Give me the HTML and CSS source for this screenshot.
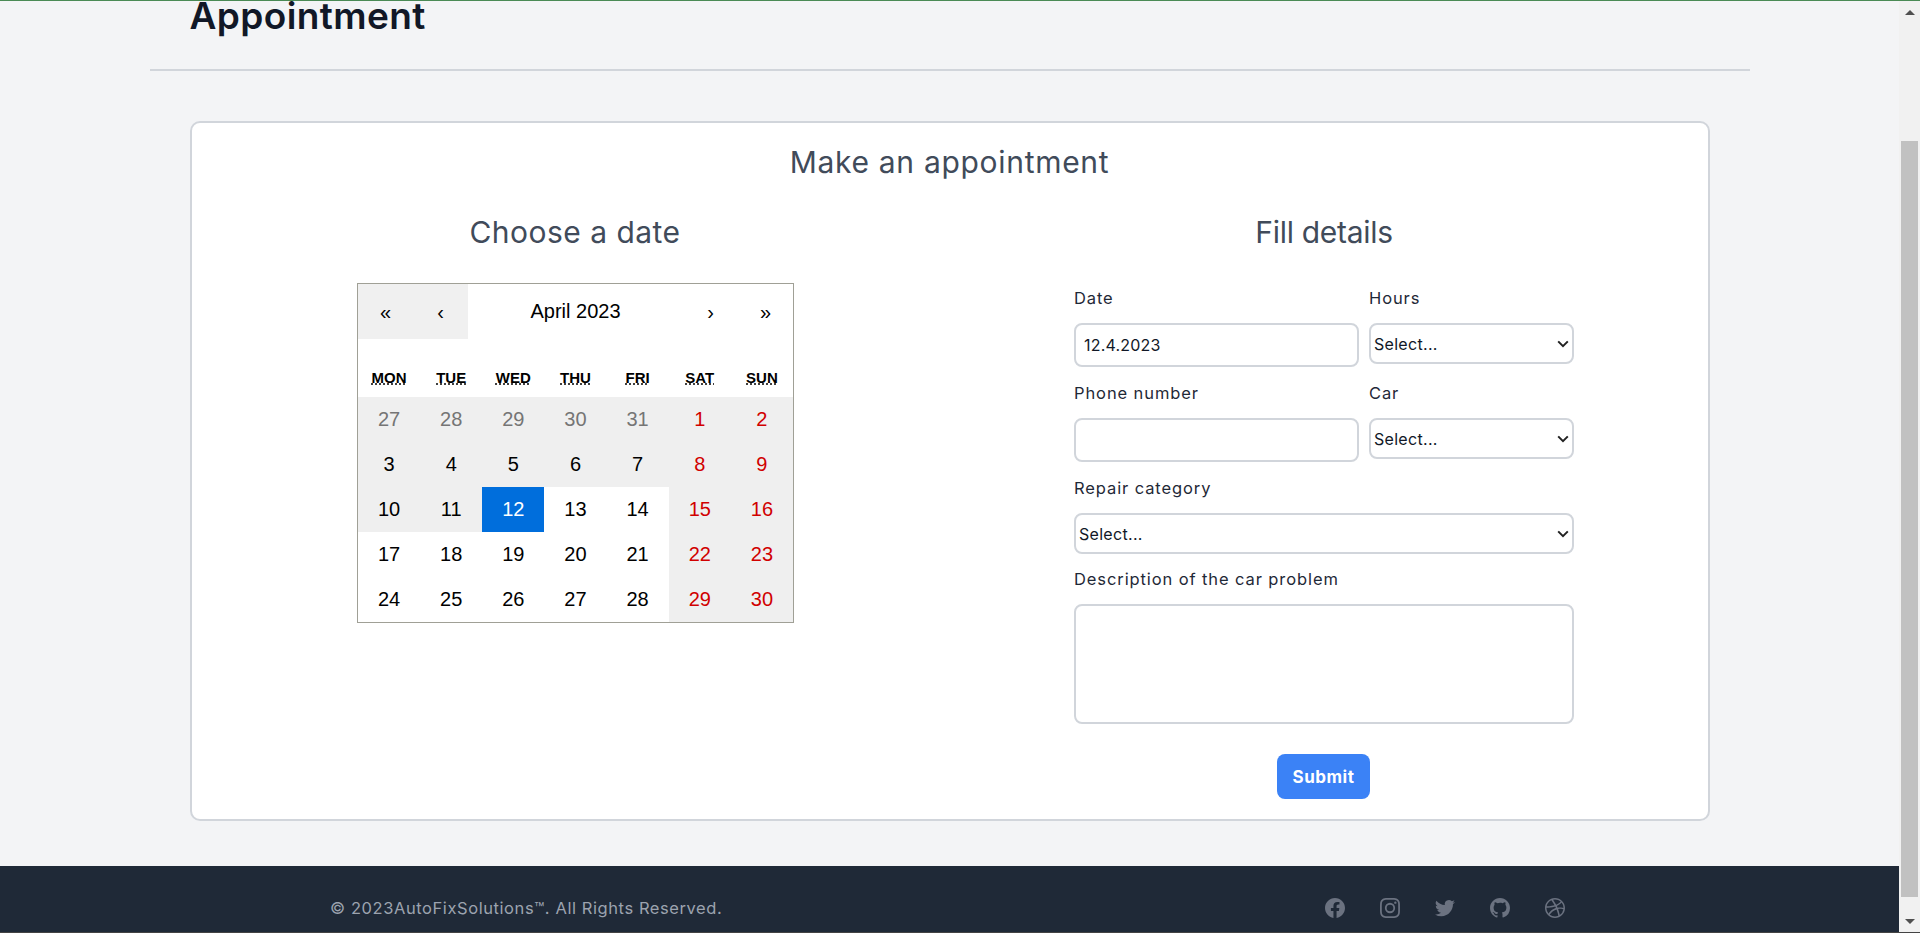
FILE: index.html
```html
<!DOCTYPE html>
<html>
  <head>
    <meta charset="UTF-8">
    <title>Appointment</title>
    <link rel="stylesheet" href="styles.css">
  </head>
  <body>
    <div class="topline"></div>
    <div class="viewport">
      <div class="page">
        <main class="container">
          <header class="page-header">
            <h1>Appointment</h1>
          </header>
          <section class="card">
            <h2 class="card-title">Make an appointment</h2>
            <div class="columns">
              <div class="col">
                <h3 class="col-title">Choose a date</h3>
                <div class="calendar">
                  <div class="cal-nav">
                    <button class="nav-btn focused">«</button>
                    <button class="nav-btn focused">‹</button>
                    <span class="nav-label">April 2023</span>
                    <button class="nav-btn">›</button>
                    <button class="nav-btn">»</button>
                  </div>
                  <div class="weekdays">
                    <div><abbr>MON</abbr></div>
                    <div><abbr>TUE</abbr></div>
                    <div><abbr>WED</abbr></div>
                    <div><abbr>THU</abbr></div>
                    <div><abbr>FRI</abbr></div>
                    <div><abbr>SAT</abbr></div>
                    <div><abbr>SUN</abbr></div>
                  </div>
                  <div class="days">
                    <div class="day off other">27</div>
                    <div class="day off other">28</div>
                    <div class="day off other">29</div>
                    <div class="day off other">30</div>
                    <div class="day off other">31</div>
                    <div class="day off red">1</div>
                    <div class="day off red">2</div>
                    <div class="day off">3</div>
                    <div class="day off">4</div>
                    <div class="day off">5</div>
                    <div class="day off">6</div>
                    <div class="day off">7</div>
                    <div class="day off red">8</div>
                    <div class="day off red">9</div>
                    <div class="day off">10</div>
                    <div class="day off">11</div>
                    <div class="day selected">12</div>
                    <div class="day">13</div>
                    <div class="day">14</div>
                    <div class="day off red">15</div>
                    <div class="day off red">16</div>
                    <div class="day">17</div>
                    <div class="day">18</div>
                    <div class="day">19</div>
                    <div class="day">20</div>
                    <div class="day">21</div>
                    <div class="day off red">22</div>
                    <div class="day off red">23</div>
                    <div class="day">24</div>
                    <div class="day">25</div>
                    <div class="day">26</div>
                    <div class="day">27</div>
                    <div class="day">28</div>
                    <div class="day off red">29</div>
                    <div class="day off red">30</div>
                  </div>
                </div>
              </div>
              <div class="col">
                <h3 class="col-title tight">Fill details</h3>
                <form class="details">
                  <div class="field">
                    <label>Date</label>
                    <input class="control" type="text" value="12.4.2023">
                  </div>
                  <div class="field">
                    <label>Hours</label>
                    <select class="control select"><option>Select...</option></select>
                  </div>
                  <div class="field">
                    <label>Phone number</label>
                    <input class="control" type="text">
                  </div>
                  <div class="field">
                    <label>Car</label>
                    <select class="control select"><option>Select...</option></select>
                  </div>
                  <div class="field wide">
                    <label>Repair category</label>
                    <select class="control select"><option>Select...</option></select>
                  </div>
                  <div class="field wide">
                    <label>Description of the car problem</label>
                    <textarea class="control area"></textarea>
                  </div>
                  <button class="submit" type="button">Submit</button>
                </form>
              </div>
            </div>
          </section>
        </main>
        <footer class="footer">
          <span class="copyright">© 2023AutoFixSolutions™. All Rights Reserved.</span>
          <div class="socials">
            <svg viewBox="0 0 24 24" fill="currentColor"><path fill-rule="evenodd" clip-rule="evenodd" d="M22 12c0-5.523-4.477-10-10-10S2 6.477 2 12c0 4.991 3.657 9.128 8.438 9.878v-6.987h-2.54V12h2.54V9.797c0-2.506 1.492-3.89 3.777-3.89 1.094 0 2.238.195 2.238.195v2.46h-1.26c-1.243 0-1.63.771-1.63 1.562V12h2.773l-.443 2.89h-2.33v6.988C18.343 21.128 22 16.991 22 12z"/></svg>
            <svg viewBox="0 0 24 24" fill="currentColor"><path fill-rule="evenodd" clip-rule="evenodd" d="M12.315 2c2.43 0 2.784.013 3.808.06 1.064.049 1.791.218 2.427.465a4.902 4.902 0 011.772 1.153 4.902 4.902 0 011.153 1.772c.247.636.416 1.363.465 2.427.048 1.067.06 1.407.06 4.123v.08c0 2.643-.012 2.987-.06 4.043-.049 1.064-.218 1.791-.465 2.427a4.902 4.902 0 01-1.153 1.772 4.902 4.902 0 01-1.772 1.153c-.636.247-1.363.416-2.427.465-1.067.048-1.407.06-4.123.06h-.08c-2.643 0-2.987-.012-4.043-.06-1.064-.049-1.791-.218-2.427-.465a4.902 4.902 0 01-1.772-1.153 4.902 4.902 0 01-1.153-1.772c-.247-.636-.416-1.363-.465-2.427-.047-1.024-.06-1.379-.06-3.808v-.63c0-2.43.013-2.784.06-3.808.049-1.064.218-1.791.465-2.427a4.902 4.902 0 011.153-1.772A4.902 4.902 0 015.45 2.525c.636-.247 1.363-.416 2.427-.465C8.901 2.013 9.256 2 11.685 2h.63zm-.081 1.802h-.468c-2.456 0-2.784.011-3.807.058-.975.045-1.504.207-1.857.344-.467.182-.8.398-1.15.748-.35.35-.566.683-.748 1.15-.137.353-.3.882-.344 1.857-.047 1.023-.058 1.351-.058 3.807v.468c0 2.456.011 2.784.058 3.807.045.975.207 1.504.344 1.857.182.466.399.8.748 1.15.35.35.683.566 1.15.748.353.137.882.3 1.857.344 1.054.048 1.37.058 4.041.058h.08c2.597 0 2.917-.01 3.96-.058.976-.045 1.505-.207 1.858-.344.466-.182.8-.398 1.15-.748.35-.35.566-.683.748-1.15.137-.353.3-.882.344-1.857.048-1.055.058-1.37.058-4.041v-.08c0-2.597-.01-2.917-.058-3.96-.045-.976-.207-1.505-.344-1.858a3.097 3.097 0 00-.748-1.15 3.098 3.098 0 00-1.15-.748c-.353-.137-.882-.3-1.857-.344-1.023-.047-1.351-.058-3.807-.058zM12 6.865a5.135 5.135 0 110 10.27 5.135 5.135 0 010-10.27zm0 1.802a3.333 3.333 0 100 6.666 3.333 3.333 0 000-6.666zm5.338-3.205a1.2 1.2 0 110 2.4 1.2 1.2 0 010-2.4z"/></svg>
            <svg viewBox="0 0 24 24" fill="currentColor"><path d="M8.29 20.251c7.547 0 11.675-6.253 11.675-11.675 0-.178 0-.355-.012-.53A8.348 8.348 0 0022 5.92a8.19 8.19 0 01-2.357.646 4.118 4.118 0 001.804-2.27 8.224 8.224 0 01-2.605.996 4.107 4.107 0 00-6.993 3.743 11.65 11.65 0 01-8.457-4.287 4.106 4.106 0 001.27 5.477A4.072 4.072 0 012.8 9.713v.052a4.105 4.105 0 003.292 4.022 4.095 4.095 0 01-1.853.07 4.108 4.108 0 003.834 2.85A8.233 8.233 0 012 18.407a11.616 11.616 0 006.29 1.84"/></svg>
            <svg viewBox="0 0 24 24" fill="currentColor"><path fill-rule="evenodd" clip-rule="evenodd" d="M12 2C6.477 2 2 6.484 2 12.017c0 4.425 2.865 8.18 6.839 9.504.5.092.682-.217.682-.483 0-.237-.008-.868-.013-1.703-2.782.605-3.369-1.343-3.369-1.343-.454-1.158-1.11-1.466-1.11-1.466-.908-.62.069-.608.069-.608 1.003.07 1.531 1.032 1.531 1.032.892 1.53 2.341 1.088 2.91.832.092-.647.35-1.088.636-1.338-2.22-.253-4.555-1.113-4.555-4.951 0-1.093.39-1.988 1.029-2.688-.103-.253-.446-1.272.098-2.65 0 0 .84-.27 2.75 1.026A9.564 9.564 0 0112 6.844c.85.004 1.705.115 2.504.337 1.909-1.296 2.747-1.027 2.747-1.027.546 1.379.202 2.398.1 2.651.64.7 1.028 1.595 1.028 2.688 0 3.848-2.339 4.695-4.566 4.943.359.309.678.92.678 1.855 0 1.338-.012 2.419-.012 2.747 0 .268.18.58.688.482A10.019 10.019 0 0022 12.017C22 6.484 17.522 2 12 2z"/></svg>
            <svg viewBox="0 0 24 24" fill="currentColor"><path fill-rule="evenodd" clip-rule="evenodd" d="M12 2C6.48 2 2 6.48 2 12s4.48 10 10 10c5.51 0 10-4.48 10-10S17.51 2 12 2zm6.605 4.61a8.502 8.502 0 011.93 5.314c-.281-.054-3.101-.629-5.943-.271-.065-.141-.12-.293-.184-.445a25.416 25.416 0 00-.564-1.236c3.145-1.28 4.577-3.124 4.761-3.362zM12 3.475c2.17 0 4.154.813 5.662 2.148-.152.216-1.443 1.941-4.48 3.08-1.399-2.57-2.95-4.675-3.189-5A8.687 8.687 0 0112 3.475zm-3.633.803a53.896 53.896 0 013.167 4.935c-3.992 1.063-7.517 1.04-7.896 1.04a8.581 8.581 0 014.729-5.975zM3.453 12.01v-.26c.37.01 4.512.065 8.775-1.215.25.477.477.965.694 1.453-.109.033-.228.065-.336.098-4.404 1.42-6.747 5.303-6.942 5.629a8.522 8.522 0 01-2.19-5.705zM12 20.547a8.482 8.482 0 01-5.239-1.8c.152-.315 1.888-3.656 6.703-5.337.022-.01.033-.01.054-.022a35.318 35.318 0 011.823 6.475 8.4 8.4 0 01-3.341.684zm4.761-1.465c-.086-.52-.542-3.015-1.659-6.084 2.679-.423 5.022.271 5.314.369a8.468 8.468 0 01-3.655 5.715z"/></svg>
          </div>
        </footer>
      </div>
      <div class="scrollbar">
        <div class="arrow-up"></div>
        <div class="thumb"></div>
        <div class="arrow-down"></div>
      </div>
    </div>
    <div class="bottomline"></div>
  </body>
</html>
```

FILE: styles.css
```css
* {
    box-sizing: border-box;
}
html, body {
    height: 100%;
}
body {
    margin: 0;
    overflow: hidden;
    display: flex;
    flex-direction: column;
    font-family: "Inter", "Open Sans", sans-serif;
    background: #f3f4f6;
    color: #111827;
}
.topline {
    height: 1px;
    background: #4a8a55;
}
.bottomline {
    height: 1px;
    background: #444;
}
.viewport {
    flex: 1;
    display: flex;
    min-height: 0;
}
.page {
    flex: 1;
    min-width: 0;
    display: flex;
    flex-direction: column;
}

/* header */
.container {
    width: 1600px;
    margin: 0 auto;
}
.page-header {
    height: 70px;
    padding-left: 40px;
    border-bottom: 2px solid #d1d5db;
}
.page-header h1 {
    margin: 0;
    font-size: 37px;
    line-height: 30px;
    font-weight: 600;
    letter-spacing: 0.4px;
    color: #111827;
}

/* card */
.card {
    margin: 50px 40px 45px;
    height: 700px;
    padding: 0 9px;
    background: #fff;
    border: 2px solid #d1d5db;
    border-radius: 10px;
}
.card-title {
    margin: 20px 0 0;
    font-size: 30px;
    line-height: 38px;
    font-weight: 400;
    letter-spacing: 0.7px;
    text-align: center;
    color: #414b5a;
}
.columns {
    display: grid;
    grid-template-columns: 1fr 1fr;
    margin-top: 32px;
}
.col {
    display: flex;
    flex-direction: column;
    align-items: center;
}
.col-title {
    margin: 0 0 32px;
    font-size: 30px;
    line-height: 38px;
    font-weight: 400;
    letter-spacing: 0.47px;
    color: #414b5a;
}
.col-title.tight {
    letter-spacing: -0.3px;
}

/* calendar */
.calendar {
    width: 437px;
    height: 340px;
    margin-left: 1px;
    border: 1px solid #a0a096;
    font-family: "Liberation Sans", Arial, sans-serif;
    font-size: 20px;
    color: #000;
    background: #fff;
}
.cal-nav {
    display: flex;
    height: 55px;
    margin-bottom: 20px;
}
.nav-btn {
    width: 55px;
    padding: 2px 0 0;
    border: 0;
    background: #fff;
    font: inherit;
    color: #000;
}
.nav-btn.focused {
    background: #f0f0f0;
}
.nav-label {
    flex: 1;
    display: flex;
    align-items: center;
    justify-content: center;
}
.weekdays {
    display: grid;
    grid-template-columns: repeat(7, 1fr);
    height: 38px;
    padding-bottom: 2px;
    align-items: center;
    text-align: center;
    font-size: 15px;
    font-weight: bold;
}
.weekdays abbr {
    text-decoration: underline dotted;
}
.days {
    display: grid;
    grid-template-columns: repeat(7, 1fr);
    grid-auto-rows: 45px;
}
.day {
    display: flex;
    align-items: center;
    justify-content: center;
}
.day.off {
    background: #efefef;
}
.day.other {
    color: #757575;
}
.day.red {
    color: #d10000;
}
.day.selected {
    background: #006edc;
    color: #fff;
}

/* form */
.details {
    width: 500px;
    display: grid;
    grid-template-columns: 285px 205px;
    column-gap: 10px;
    margin-top: 3px;
    font-size: 16px;
}
.field {
    display: flex;
    flex-direction: column;
    align-items: stretch;
}
.field.wide {
    grid-column: 1 / 3;
}
.field label {
    height: 24px;
    margin-bottom: 13px;
    line-height: 24px;
    font-size: 16.5px;
    color: #1f2937;
    letter-spacing: 0.9px;
}
.control {
    height: 44px;
    margin-bottom: 14px;
    padding: 0 8px;
    border: 2px solid #d1d5db;
    border-radius: 8px;
    background: #fff;
    font-family: inherit;
    font-size: 16px;
    letter-spacing: 0.2px;
    color: #111827;
}
.select {
    height: 41px;
    margin-bottom: 13px;
    padding: 0 0 0 3px;
    letter-spacing: 0.3px;
    appearance: none;
    background: #fff url("data:image/svg+xml,%3Csvg xmlns='http://www.w3.org/2000/svg' width='12' height='8' viewBox='0 0 12 8'%3E%3Cpath d='M1.2 1.4 6 6.2l4.8-4.8' fill='none' stroke='%23222' stroke-width='2'/%3E%3C/svg%3E") no-repeat right 3px center;
}
.area {
    height: 120px;
    margin-bottom: 30px;
    resize: none;
}
.submit {
    grid-column: 1 / 3;
    justify-self: center;
    width: 93px;
    height: 45px;
    margin-right: 1px;
    border: 0;
    border-radius: 8px;
    background: #3b82f6;
    color: #fff;
    font-family: inherit;
    font-size: 17px;
    font-weight: 700;
    letter-spacing: 0.5px;
}

/* footer */
.footer {
    flex: 1;
    display: flex;
    justify-content: space-between;
    align-items: flex-start;
    padding: 29px 332px 0 330px;
    background: #1f2937;
}
.copyright {
    font-size: 16.5px;
    line-height: 26px;
    color: #9ca3af;
    letter-spacing: 0.58px;
}
.socials {
    display: flex;
    gap: 31px;
    margin-top: 1px;
    color: #6b7280;
}
.socials svg {
    width: 24px;
    height: 24px;
    display: block;
}

/* window scrollbar */
.scrollbar {
    width: 21px;
    display: flex;
    flex-direction: column;
    align-items: center;
    background: #f1f1f1;
}
.arrow-up {
    margin-top: 9px;
    border: 5px solid transparent;
    border-top: 0;
    border-bottom-color: #505050;
}
.thumb {
    width: 17px;
    height: 756px;
    margin-top: 126px;
    background: #c1c1c1;
}
.arrow-down {
    margin-top: 22px;
    border: 5px solid transparent;
    border-bottom: 0;
    border-top-color: #505050;
}
```
